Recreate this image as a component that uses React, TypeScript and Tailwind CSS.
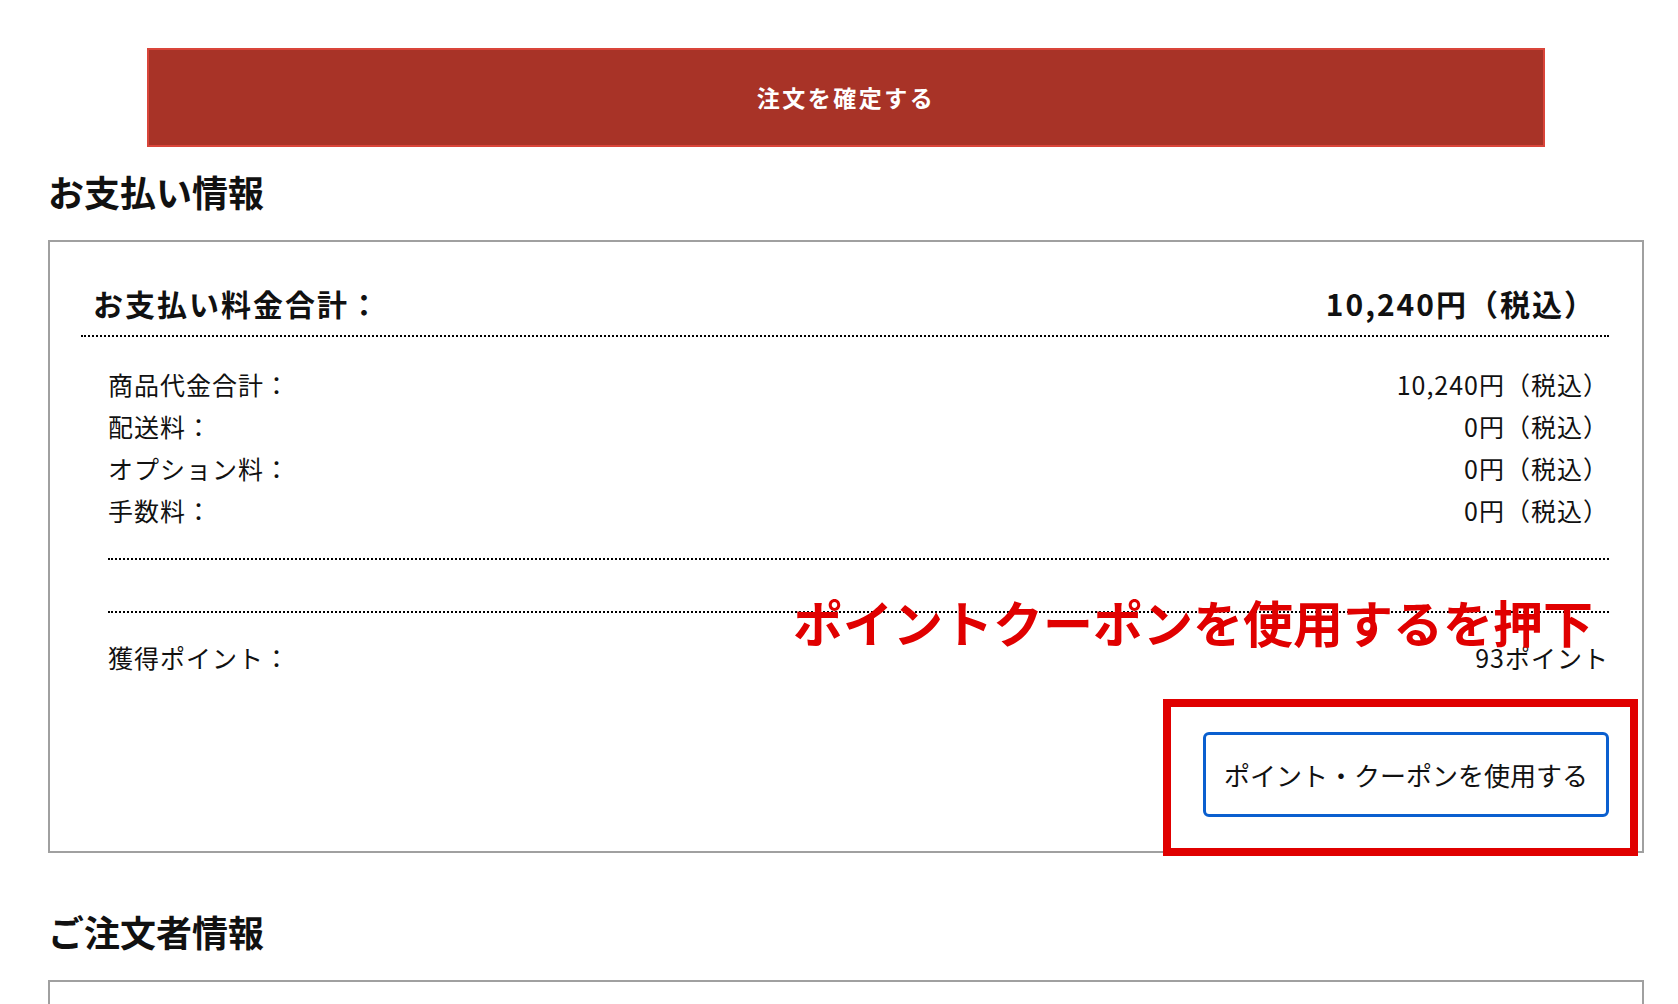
import React from "react";

const jp = { fontFamily: '"Noto Sans CJK JP", "Noto Sans", sans-serif' };

function FeeRow({ label, value }: { label: string; value: string }) {
  return (
    <div className="flex items-center justify-between h-[42px] text-[25px] tracking-[1px] text-[#111]">
      <span>{label}</span>
      <span>{value}</span>
    </div>
  );
}

export default function App() {
  return (
    <div className="min-h-screen bg-white pl-[48px] overflow-hidden" style={jp}>
      <div className="w-[1596px]">
        <div className="pt-[48px] px-[99px]">
          <button className="w-full h-[99px] bg-[#a83327] border-2 border-[#d9453a] text-white font-bold text-[23px] tracking-[2.5px] flex items-center justify-center">
            注文を確定する
          </button>
        </div>

        <h2 className="mt-[21px] mb-[26px] text-[36px] leading-[46px] font-bold text-[#111]">お支払い情報</h2>

        <div className="border-2 border-[#a0a0a0]">
          <div className="ml-[31px] mr-[33px]">
            <div className="pt-[41px] pb-[12px] pl-[12px] pr-[13px] border-b-2 border-dotted border-black flex items-center justify-between leading-[40px] text-[30px] font-bold tracking-[2px] text-[#111]">
              <span>お支払い料金合計：</span>
              <span>10,240円（税込）</span>
            </div>

            <div className="ml-[27px]">
              <div className="pt-[27px] pb-[26px] border-b-2 border-dotted border-black">
                <FeeRow label="商品代金合計：" value="10,240円（税込）" />
                <FeeRow label="配送料：" value="0円（税込）" />
                <FeeRow label="オプション料：" value="0円（税込）" />
                <FeeRow label="手数料：" value="0円（税込）" />
              </div>

              <div className="h-[53px] border-b-2 border-dotted border-black" />

              <div className="relative pt-[24px]">
                <div className="absolute right-[16px] -top-[17px] text-[50px] leading-[50px] font-bold text-[#e00000] whitespace-nowrap">
                  ポイントクーポンを使用するを押下
                </div>
                <FeeRow label="獲得ポイント：" value="93ポイント" />
              </div>

              <div className="flex justify-end pt-[53px] pb-[34px]">
                <div className="relative">
                  <button className="w-[406px] h-[85px] border-[3px] border-[#0a5fcf] rounded-[6px] bg-white text-[26px] text-[#111] flex items-center justify-center">
                    ポイント・クーポンを使用する
                  </button>
                  <div className="absolute -left-[40px] -right-[29px] -top-[33px] -bottom-[39px] border-[8px] border-[#e00000]" />
                </div>
              </div>
            </div>
          </div>
        </div>

        <h2 className="mt-[55px] mb-[26px] text-[36px] leading-[46px] font-bold text-[#111]">ご注文者情報</h2>

        <div className="h-[120px] border-2 border-[#a0a0a0]" />
      </div>
    </div>
  );
}
